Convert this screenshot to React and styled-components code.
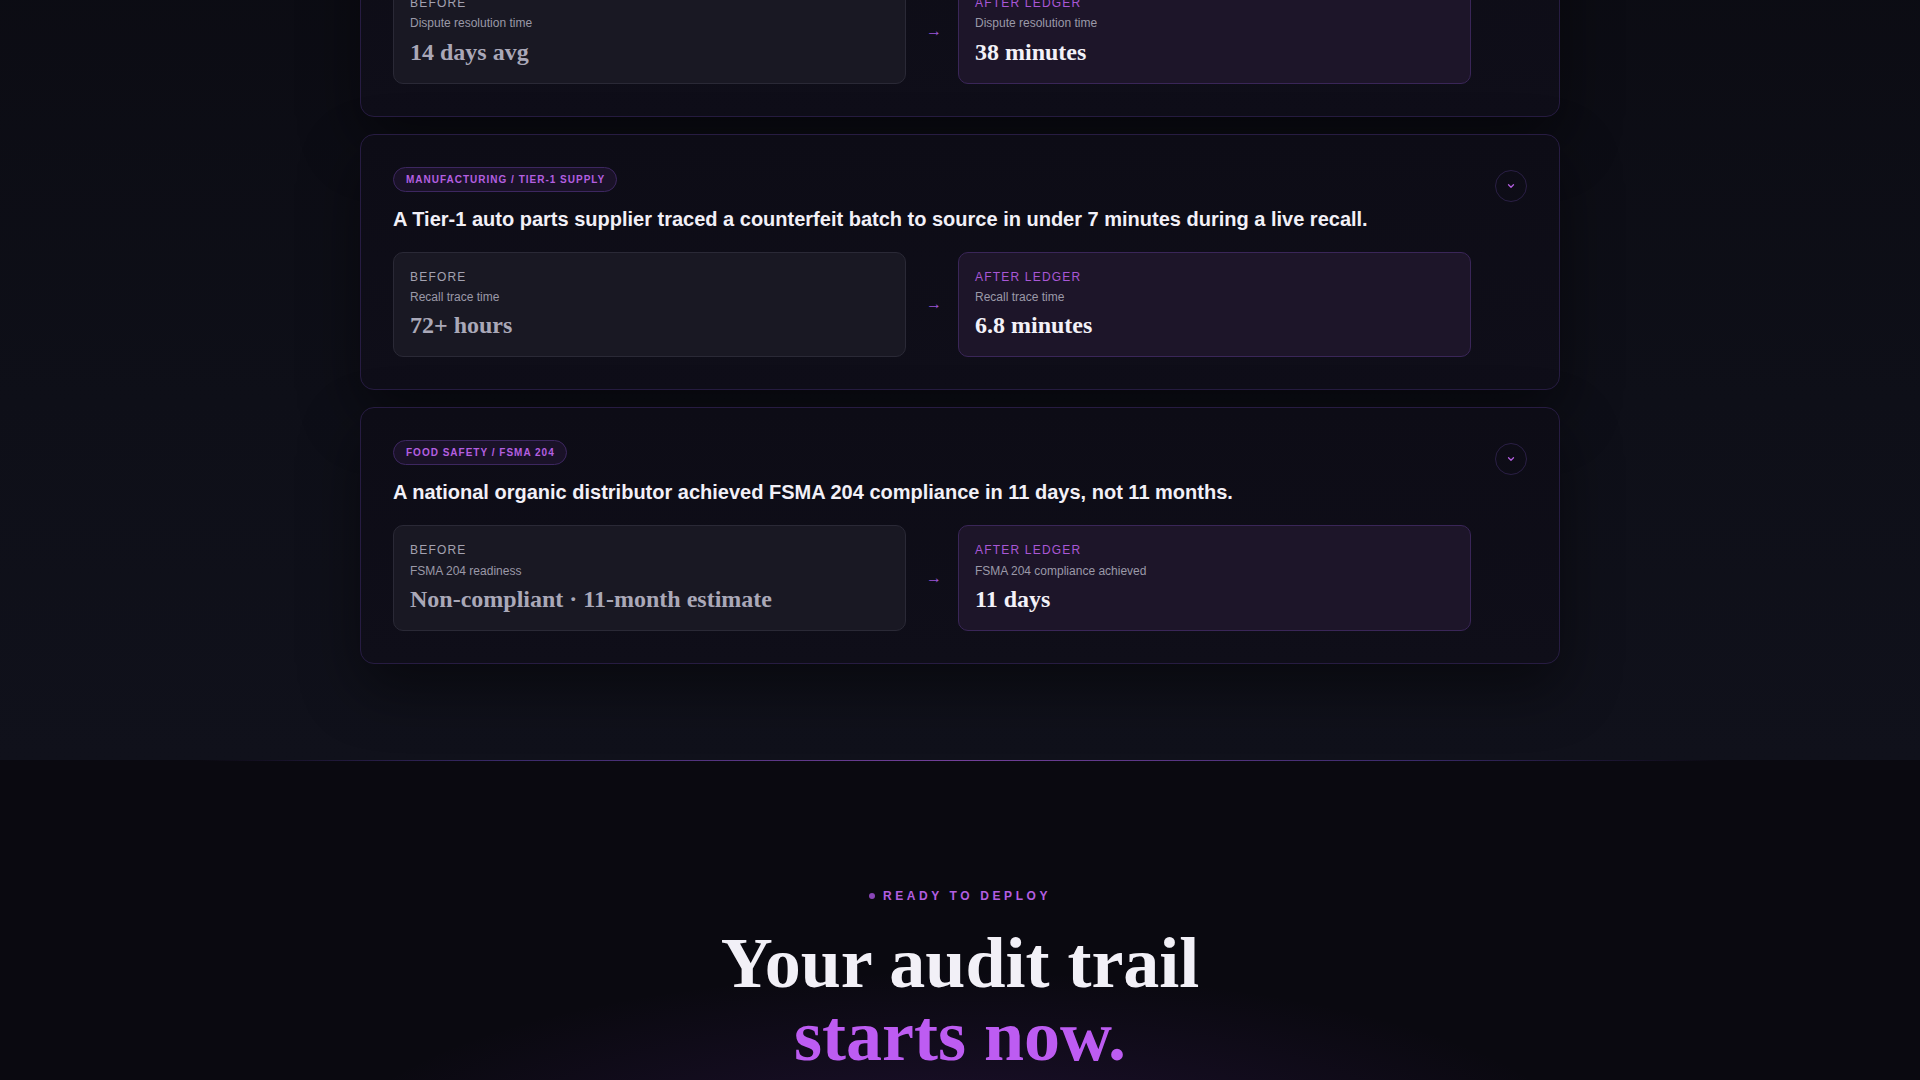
import React from 'react';
import styled, {createGlobalStyle} from 'styled-components';

const GlobalStyle = createGlobalStyle`
  html, body {
    margin: 0;
    padding: 0;
    background: #0a0a10;
  }
  body {
    font-family: "Liberation Sans", Arial, sans-serif;
    color: #f0eef6;
    overflow: hidden;
  }
`;

const Page = styled.div`
  width: 100%;
  height: 1080px;
  overflow: hidden;
`;

// the page is scrolled: first case card sits partly above the viewport
const Scrolled = styled.div`
  margin-top: -140px;
`;

const CasesSection = styled.section`
  display: flex;
  flex-direction: column;
  align-items: center;
  gap: 17px;
  padding-bottom: 96px;
  background: linear-gradient(180deg, #0b0b12 0%, #0e0f18 60%, #10111b 100%);
`;

const CaseCard = styled.article`
  display: flex;
  gap: 24px;
  width: 1200px;
  box-sizing: border-box;
  padding: 32px;
  border: 1px solid #271c42;
  border-radius: 14px;
  background: linear-gradient(180deg, #0d0c16 0%, #0f0e19 100%);
  box-shadow: 0 24px 60px rgba(0, 0, 0, 0.45);
`;

const CaseBody = styled.div`
  display: flex;
  flex-direction: column;
  flex: 1;
  min-width: 0;
`;

const Badge = styled.span`
  align-self: flex-start;
  padding: 5px 11px 5px 12px;
  border: 1px solid #3d2760;
  border-radius: 999px;
  background: #1a1228;
  color: #b45fe0;
  font-size: 10px;
  line-height: 13px;
  font-weight: 700;
  letter-spacing: 1px;
  text-transform: uppercase;
`;

const Headline = styled.h3`
  margin: 14px 0 20px;
  color: #f2f0f7;
  font-size: 20px;
  line-height: 26px;
  font-weight: 700;
`;

const Compare = styled.div`
  display: grid;
  grid-template-columns: 1fr auto 1fr;
  align-items: center;
  gap: 20px;
`;

const Box = styled.div`
  padding: 17px 16px 16px;
  border-radius: 10px;
  border: 1px solid ${({after}) => (after ? '#3a2658' : '#2a2936')};
  background: ${({after}) => (after ? '#1d1529' : '#191823')};
`;

const BoxLabel = styled.div`
  margin-bottom: 6px;
  color: ${({after}) => (after ? '#a957d6' : '#a3a1b0')};
  font-size: 12px;
  line-height: 14.4px;
  letter-spacing: 0.1em;
  text-transform: uppercase;
`;

const BoxMetric = styled.div`
  margin-bottom: 7px;
  color: #9b99a8;
  font-size: 12px;
  line-height: 14.4px;
`;

const BoxValue = styled.div`
  color: ${({after}) => (after ? '#f3f1f8' : '#aaa8b8')};
  font-family: "Liberation Serif", "Times New Roman", serif;
  font-size: 24px;
  line-height: 28.8px;
  font-weight: 700;
`;

const Arrow = styled.span`
  width: 12px;
  color: #9c55d6;
  font-size: 16px;
  line-height: 16px;
  text-align: center;
`;

const ToggleButton = styled.button`
  flex: none;
  display: flex;
  align-items: center;
  justify-content: center;
  width: 32px;
  height: 32px;
  margin-top: 3px;
  padding: 0;
  border: 1px solid #2a1f45;
  border-radius: 50%;
  background: transparent;
  color: #b45fe0;
  cursor: pointer;
`;

const CtaSection = styled.section`
  position: relative;
  display: flex;
  flex-direction: column;
  align-items: center;
  padding-top: 128px;
  padding-bottom: 80px;
  background:
    radial-gradient(ellipse 900px 260px at 50% 100%, rgba(120, 50, 190, 0.18), transparent 70%),
    #0a0910;

  &::before {
    content: '';
    position: absolute;
    top: 0;
    left: 200px;
    right: 200px;
    height: 1px;
    background: linear-gradient(90deg, transparent, #3a2a6a 20%, #73409a 50%, #3a2a6a 80%, transparent);
  }
`;

const Eyebrow = styled.div`
  display: flex;
  align-items: center;
  gap: 8px;
  color: #b35ee0;
  font-size: 12px;
  line-height: 16px;
  font-weight: 700;
  letter-spacing: 0.3em;

  &::before {
    content: '';
    width: 6px;
    height: 6px;
    border-radius: 50%;
    background: #8a46b8;
  }
`;

const Title = styled.h2`
  margin: 23px 0 0;
  text-align: center;
  color: #f2f0f7;
  font-family: "Liberation Serif", "Times New Roman", serif;
  font-size: 72px;
  line-height: 73px;
  font-weight: 700;
`;

const Accent = styled.span`
  display: block;
  color: #bd5cf2;
`;

const cases = [
    {
        tag: 'Financial services / Carrier billing',
        headline: 'A national 3PL closed carrier billing disputes in minutes instead of weeks with a shared, signed ledger.',
        metricBefore: 'Dispute resolution time',
        before: '14 days avg',
        metricAfter: 'Dispute resolution time',
        after: '38 minutes',
    },
    {
        tag: 'Manufacturing / Tier-1 supply',
        headline: 'A Tier-1 auto parts supplier traced a counterfeit batch to source in under 7 minutes during a live recall.',
        metricBefore: 'Recall trace time',
        before: '72+ hours',
        metricAfter: 'Recall trace time',
        after: '6.8 minutes',
    },
    {
        tag: 'Food safety / FSMA 204',
        headline: 'A national organic distributor achieved FSMA 204 compliance in 11 days, not 11 months.',
        metricBefore: 'FSMA 204 readiness',
        before: 'Non-compliant · 11-month estimate',
        metricAfter: 'FSMA 204 compliance achieved',
        after: '11 days',
    },
];

const Chevron = () => (
    <svg width="10" height="10" viewBox="0 0 24 24" fill="none" stroke="currentColor" strokeWidth="3" strokeLinecap="round" strokeLinejoin="round">
        <path d="M6 9l6 6 6-6"/>
    </svg>
);

const CaseStudy = ({item}) => (
    <CaseCard>
        <CaseBody>
            <Badge>{item.tag}</Badge>
            <Headline>{item.headline}</Headline>
            <Compare>
                <Box>
                    <BoxLabel>Before</BoxLabel>
                    <BoxMetric>{item.metricBefore}</BoxMetric>
                    <BoxValue>{item.before}</BoxValue>
                </Box>
                <Arrow>→</Arrow>
                <Box after>
                    <BoxLabel after>After Ledger</BoxLabel>
                    <BoxMetric>{item.metricAfter}</BoxMetric>
                    <BoxValue after>{item.after}</BoxValue>
                </Box>
            </Compare>
        </CaseBody>
        <ToggleButton aria-label="Expand case study">
            <Chevron/>
        </ToggleButton>
    </CaseCard>
);

const App = () => (
    <Page>
        <GlobalStyle/>
        <Scrolled>
            <CasesSection>
                {cases.map(item => <CaseStudy key={item.tag} item={item}/>)}
            </CasesSection>
            <CtaSection>
                <Eyebrow>READY TO DEPLOY</Eyebrow>
                <Title>
                    Your audit trail
                    <Accent>starts now.</Accent>
                </Title>
            </CtaSection>
        </Scrolled>
    </Page>
);

export default App;
